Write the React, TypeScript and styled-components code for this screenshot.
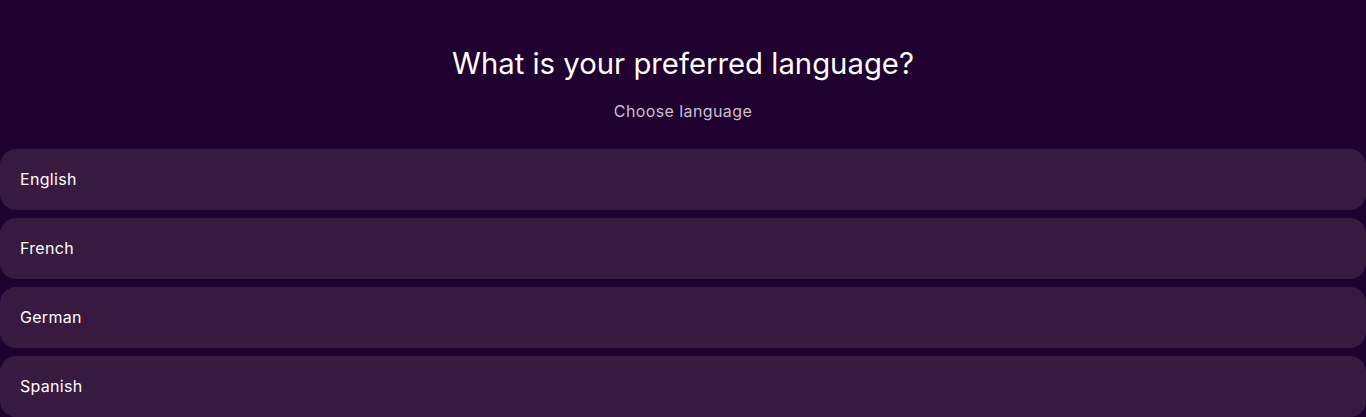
import React from "react";
import styled, { createGlobalStyle } from "styled-components";

const Global = createGlobalStyle`
  html, body { margin: 0; padding: 0; background: #1f002f; }
  body { font-family: "Inter", "Noto Sans", sans-serif; -webkit-font-smoothing: antialiased; }
`;

const Page = styled.div`
  display: flex;
  flex-direction: column;
  align-items: stretch;
  padding-top: 44px;
  background: #1f002f;
`;

const Header = styled.div`
  display: flex;
  flex-direction: column;
  align-items: center;
  gap: 16px;
  margin-bottom: 27px;
`;

const Title = styled.h1`
  margin: 0;
  font-size: 29.3px;
  line-height: 40px;
  font-weight: 400;
  color: #ffffff;
`;

const Subtitle = styled.p`
  margin: 0;
  font-size: 16px;
  line-height: 22px;
  letter-spacing: 0.4px;
  color: #cbbfcf;
`;

const List = styled.div`
  display: flex;
  flex-direction: column;
  gap: 8px;
`;

const Option = styled.button`
  display: flex;
  align-items: center;
  height: 61px;
  padding: 0 20px 2px;
  border: none;
  border-radius: 16px;
  background: #381a41;
  color: #ffffff;
  font-family: inherit;
  font-size: 16px;
  letter-spacing: 0.3px;
  text-align: left;
  cursor: pointer;
`;

const languages = ["English", "French", "German", "Spanish"];

export default function App() {
  return (
    <>
      <Global />
      <Page>
        <Header>
          <Title>What is your preferred language?</Title>
          <Subtitle>Choose language</Subtitle>
        </Header>
        <List>
          {languages.map((l) => (
            <Option key={l}>{l}</Option>
          ))}
        </List>
      </Page>
    </>
  );
}
